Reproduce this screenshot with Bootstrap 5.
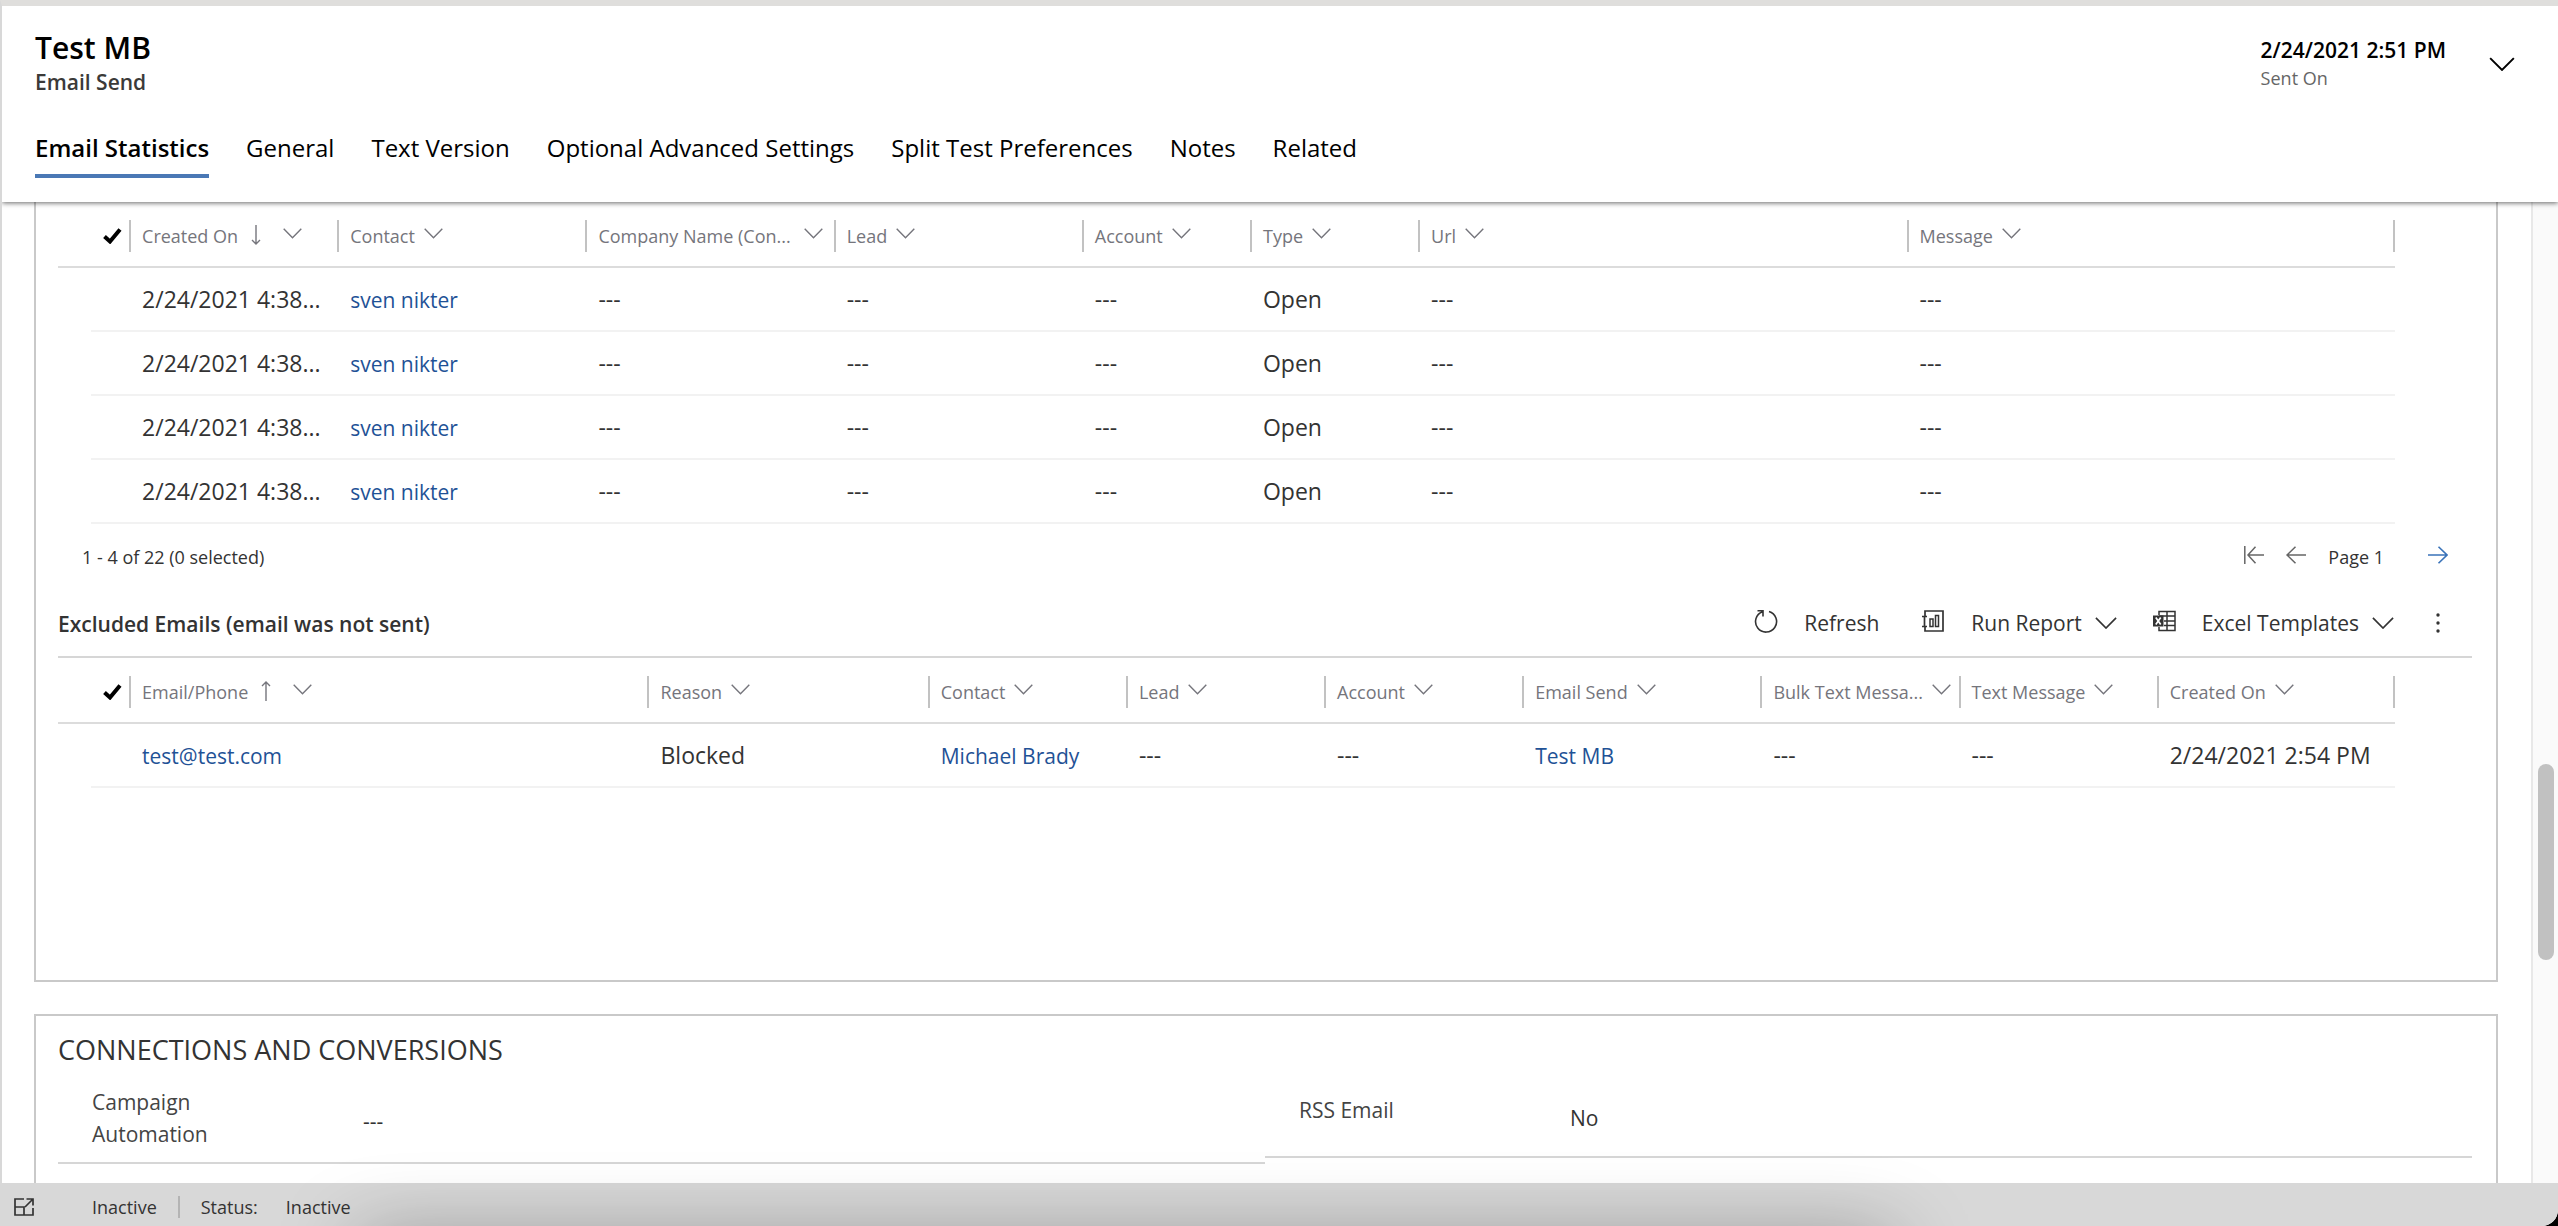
<!DOCTYPE html>
<html lang="en">
<head>
<meta charset="utf-8">
<meta name="viewport" content="width=device-width, initial-scale=1">
<title>Test MB - Email Send</title>
<link href="https://cdn.jsdelivr.net/npm/bootstrap@5.3.0/dist/css/bootstrap.min.css" rel="stylesheet">
<style>
  html, body { height: 100%; }
  body { font-family: "Open Sans", "Noto Sans", sans-serif; font-size: 21px; line-height: 32px; color: #333; background: #000; }
  svg { fill: none; stroke: currentColor; flex: none; }
  h1, h2, h3, p { margin: 0; }
  button { color: inherit; background: none; border: 0; padding: 0; }

  .app-shell { height: 100%; background: #fff; border-top: 6px solid #dfdedc; border-left: 2px solid #d8d8d8; border-bottom-right-radius: 16px; }

  /* record header */
  .record-head { z-index: 2; padding: 22px 43px 24px 33px; background: #fff; box-shadow: 0 1px 5px rgba(0, 0, 0, .6); clip-path: inset(0 0 -8px 0); color: #000; }
  .record-head h1 { font-size: 30px; line-height: 40px; font-weight: 600; }
  .record-head h2 { font-size: 21px; line-height: 28px; font-weight: 600; color: #3b3a39; }
  .head-summary { gap: 43px; }
  .head-date { font-weight: 600; line-height: 28px; padding-top: 8px; }
  .head-caption { font-size: 18px; line-height: 28px; color: #666; }
  .record-tabs { gap: 37px; margin-top: 34px; }
  .record-tabs a { padding: 0 0 8px; border-bottom: 4px solid transparent; font-size: 24px; line-height: 36px; color: #000; text-decoration: none; }
  .record-tabs a.active { font-weight: 600; border-color: #4a78b5; }

  /* scrolling form */
  .form-body { padding: 0 33px 0 32px; }
  .form-panel { border: 2px solid #c9c9c9; padding: 0 24px 48px 22px; }
  .form-panel + .form-panel { margin-top: 32px; padding-top: 16px; }
  .panel-grids { border-top: 0; padding-bottom: 192px; }
  .scroll-track { flex: none; width: 27px; background: #fafafa; border-left: 2px solid #e8e8e8; padding: 562px 4px 0 5px; }
  .scroll-thumb { height: 196px; background: #c1c1c1; border-radius: 9px; }

  /* grids */
  .grid-wrap { padding-right: 77px; }
  .data-grid { table-layout: fixed; width: 100%; }
  .data-grid th { padding: 18px 0 14px; border-bottom: 2px solid #dcdcdc; font-weight: 400; }
  .data-grid td { height: 64px; padding: 0 0 0 13px; border-bottom: 2px solid #f2f2f2; font-size: 23px; white-space: nowrap; }
  .data-grid td:first-child { border-bottom: 0; }
  .data-grid td a { font-size: 21px; color: #1f5296; text-decoration: none; }
  .select-all { display: block; margin: 0 7px 4px auto; line-height: 1; color: #000; }
  .head-cell { height: 32px; border-left: 2px solid #c2c2c2; padding-left: 11px; gap: 9px; color: #75757c; font-size: 18px; white-space: nowrap; }
  .head-cell svg { margin-bottom: 5px; }
  th:last-child .head-cell { border-right: 2px solid #c2c2c2; }
  .head-cell .sort-arrow { margin: 0 13px 2px 4px; }
  .w-gutter { width: 33px; } .w-check { width: 38px; }
  .w-168 { width: 168px; } .w-198 { width: 198px; } .w-208 { width: 208px; } .w-238 { width: 238px; } .w-248 { width: 248px; }
  .w-280 { width: 280px; } .w-488 { width: 488px; } .w-518 { width: 518px; }

  .paging-bar { height: 66px; padding: 0 24px; font-size: 18px; }
  .paging-bar button { margin-bottom: 6px; line-height: 1; }
  .paging-tools { gap: 22px; color: #666; }
  .page-label { color: #333; margin-right: 22px; }
  .next-page { color: #3a73b9; }
  .sub-bar { height: 68px; border-bottom: 2px solid #d6d6d6; }
  .sub-bar h3 { font-size: 21px; font-weight: 600; line-height: 32px; padding-top: 2px; }
  .tool-row { gap: 35px; padding-right: 29px; }
  .tool-row button { gap: 26px; }
  .tool-row button .glyph { margin-bottom: 4px; }
  .tool-row .with-menu { margin-left: 7px; }
  .menu-chevron { margin-left: -13px; }

  /* connections section */
  .form-panel h2 { font-size: 27px; font-weight: 400; line-height: 36px; margin-bottom: 12px; }
  .field-row { border-bottom: 2px solid #d6d6d6; padding-left: 34px; }
  .field-tall { height: 84px; } .field-short { height: 78px; }
  .field-name { width: 271px; color: #444; }
  .field-name span { display: block; width: 160px; }
  .field-tall .field-name { padding-bottom: 6px; } .field-short .field-name { padding-bottom: 16px; }

  .status-foot { z-index: 2; height: 44px; background: #d8d8d8; font-size: 18px; border-bottom-right-radius: 16px; padding: 4px 0 0 13px; margin-left: -2px; }
  .foot-state { margin-left: 57px; padding-right: 21px; margin-right: 21px; border-right: 2px solid #b4b4b4; line-height: 22px; }
  .foot-value { margin-left: 28px; }
  /* soft shadow that spreads up from under the window edge */
  .glow-layer { position: absolute; inset: 0; z-index: 3; overflow: hidden; pointer-events: none; }
  .edge-glow { position: absolute; left: 14%; right: 26%; top: calc(100% + 14px); height: 60px; box-shadow: 0 0 80px rgba(0, 0, 0, .35); }
</style>
<script src="https://cdn.jsdelivr.net/npm/bootstrap@5.3.0/dist/js/bootstrap.bundle.min.js" defer></script>
</head>
<body class="position-relative">
<svg class="d-none">
  <symbol id="chev" viewBox="0 0 19 11"><path d="M.7.7 9.500 9.800 18.300.7" stroke-width="1.400"/></symbol>
  <symbol id="chev-lg" viewBox="0 0 24 13"><path d="M1 1 12 12 23 1" stroke-width="1.800"/></symbol>
  <symbol id="tick" viewBox="0 0 19 16"><path d="M1.500 8.500 7 13.500 17 1.500" stroke-width="4"/></symbol>
  <symbol id="back" viewBox="0 0 20 18"><path d="M20 9H1M9.500.7 1 9l8.500 8.300" stroke-width="1.500"/></symbol>
</svg>
<div class="app-shell d-flex flex-column overflow-hidden">
  <header class="record-head position-relative">
    <div class="d-flex justify-content-between">
      <div>
        <h1>Test MB</h1>
        <h2>Email Send</h2>
      </div>
      <div class="head-summary d-flex">
        <div>
          <div class="head-date">2/24/2021 2:51 PM</div>
          <div class="head-caption">Sent On</div>
        </div>
        <button type="button" aria-label="Expand header"><svg width="26" height="14"><use href="#chev-lg"/></svg></button>
      </div>
    </div>
    <nav class="record-tabs nav" aria-label="Form tabs">
      <a class="active" href="#">Email Statistics</a>
      <a href="#">General</a>
      <a href="#">Text Version</a>
      <a href="#">Optional Advanced Settings</a>
      <a href="#">Split Test Preferences</a>
      <a href="#">Notes</a>
      <a href="#">Related</a>
    </nav>
  </header>

  <div class="d-flex flex-grow-1 overflow-hidden">
    <main class="form-body flex-grow-1 overflow-hidden">
      <section class="form-panel panel-grids">
        <div class="grid-wrap">
          <table class="data-grid">
            <colgroup><col class="w-gutter"><col class="w-check"><col class="w-208"><col class="w-248"><col class="w-248"><col class="w-248"><col class="w-168"><col class="w-168"><col class="w-488"><col class="w-488"></colgroup>
            <thead>
              <tr>
                <th></th>
                <th><button type="button" class="select-all" aria-label="Select all"><svg width="19" height="16"><use href="#tick"/></svg></button></th>
                <th><div class="head-cell d-flex align-items-center"><span>Created On</span><svg class="sort-arrow" width="10" height="20" viewBox="0 0 10 20"><path d="M5 0v19M1 15l4 4 4-4" stroke-width="1.400"/></svg><svg width="19" height="11"><use href="#chev"/></svg></div></th>
                <th><div class="head-cell d-flex align-items-center"><span>Contact</span><svg width="19" height="11"><use href="#chev"/></svg></div></th>
                <th><div class="head-cell d-flex align-items-center"><span>Company Name (Con...</span><svg class="ms-1" width="19" height="11"><use href="#chev"/></svg></div></th>
                <th><div class="head-cell d-flex align-items-center"><span>Lead</span><svg width="19" height="11"><use href="#chev"/></svg></div></th>
                <th><div class="head-cell d-flex align-items-center"><span>Account</span><svg width="19" height="11"><use href="#chev"/></svg></div></th>
                <th><div class="head-cell d-flex align-items-center"><span>Type</span><svg width="19" height="11"><use href="#chev"/></svg></div></th>
                <th><div class="head-cell d-flex align-items-center"><span>Url</span><svg width="19" height="11"><use href="#chev"/></svg></div></th>
                <th><div class="head-cell d-flex align-items-center"><span>Message</span><svg width="19" height="11"><use href="#chev"/></svg></div></th>
              </tr>
            </thead>
            <tbody>
              <tr><td></td><td></td><td>2/24/2021 4:38...</td><td><a href="#">sven nikter</a></td><td>---</td><td>---</td><td>---</td><td>Open</td><td>---</td><td>---</td></tr>
              <tr><td></td><td></td><td>2/24/2021 4:38...</td><td><a href="#">sven nikter</a></td><td>---</td><td>---</td><td>---</td><td>Open</td><td>---</td><td>---</td></tr>
              <tr><td></td><td></td><td>2/24/2021 4:38...</td><td><a href="#">sven nikter</a></td><td>---</td><td>---</td><td>---</td><td>Open</td><td>---</td><td>---</td></tr>
              <tr><td></td><td></td><td>2/24/2021 4:38...</td><td><a href="#">sven nikter</a></td><td>---</td><td>---</td><td>---</td><td>Open</td><td>---</td><td>---</td></tr>
            </tbody>
          </table>
        </div>
        <div class="paging-bar d-flex align-items-center justify-content-between">
          <span>1 - 4 of 22 (0 selected)</span>
          <div class="paging-tools d-flex align-items-center">
            <button type="button" aria-label="First page"><svg width="20" height="18" viewBox="0 0 20 18"><path d="M.8 0v18M20 9H4M11.500.7 4 9l7.500 8.300" stroke-width="1.500"/></svg></button>
            <button type="button" aria-label="Previous page"><svg width="20" height="18"><use href="#back"/></svg></button>
            <span class="page-label">Page 1</span>
            <button type="button" class="next-page" aria-label="Next page"><svg width="20" height="18" viewBox="0 0 20 18"><path d="M0 9h19M10.500.7 19 9l-8.500 8.300" stroke-width="1.600"/></svg></button>
          </div>
        </div>
        <div class="sub-bar d-flex align-items-center justify-content-between">
          <h3>Excluded Emails (email was not sent)</h3>
          <div class="tool-row d-flex align-items-center">
            <button type="button" class="d-flex align-items-center"><svg class="glyph" width="24" height="24" viewBox="0 0 24 24"><path d="M15 2.500A10.500 10.500 0 1 1 8.500 2.700M3.500 1.800H9V7.500" stroke-width="1.600"/></svg>Refresh</button>
            <button type="button" class="with-menu d-flex align-items-center"><svg class="glyph" width="24" height="24" viewBox="0 0 24 24"><path d="M4 7V2H22V22H4V18M1 7.500H6M1 17.500H6M3.500 7.500V17.500" stroke-width="1.700"/><path d="M9 10h3v7.500h-3zM14.500 6.500h3v11h-3z" stroke-width="1.500"/></svg>Run Report<svg class="menu-chevron" width="22" height="12"><use href="#chev-lg"/></svg></button>
            <button type="button" class="d-flex align-items-center"><svg class="glyph" width="24" height="24" viewBox="0 0 24 24"><path d="M7 6V2.500H23V21.500H7V18M7 7H23M12 12H23M12 16.500H23M15 2V22" stroke-width="1.500"/><path d="M1 6.500H11.500V17.500H1z" fill="currentColor" stroke="none"/><path d="M3.800 8.500 8.700 15.500M8.700 8.500 3.800 15.500" stroke="#fff" stroke-width="1.700"/></svg>Excel Templates<svg class="menu-chevron" width="22" height="12"><use href="#chev-lg"/></svg></button>
            <button type="button" class="ms-1 d-flex" aria-label="More commands"><svg width="10" height="22" viewBox="0 0 10 22"><g fill="currentColor" stroke="none"><circle cx="5" cy="3" r="1.700"/><circle cx="5" cy="11" r="1.700"/><circle cx="5" cy="19" r="1.700"/></g></svg></button>
          </div>
        </div>
        <div class="grid-wrap">
          <table class="data-grid">
            <colgroup><col class="w-gutter"><col class="w-check"><col class="w-518"><col class="w-280"><col class="w-198"><col class="w-198"><col class="w-198"><col class="w-238"><col class="w-198"><col class="w-198"><col class="w-238"></colgroup>
            <thead>
              <tr>
                <th></th>
                <th><button type="button" class="select-all" aria-label="Select all"><svg width="19" height="16"><use href="#tick"/></svg></button></th>
                <th><div class="head-cell d-flex align-items-center"><span>Email/Phone</span><svg class="sort-arrow" width="10" height="20" viewBox="0 0 10 20"><path d="M5 20V1M1 5l4-4 4 4" stroke-width="1.400"/></svg><svg width="19" height="11"><use href="#chev"/></svg></div></th>
                <th><div class="head-cell d-flex align-items-center"><span>Reason</span><svg width="19" height="11"><use href="#chev"/></svg></div></th>
                <th><div class="head-cell d-flex align-items-center"><span>Contact</span><svg width="19" height="11"><use href="#chev"/></svg></div></th>
                <th><div class="head-cell d-flex align-items-center"><span>Lead</span><svg width="19" height="11"><use href="#chev"/></svg></div></th>
                <th><div class="head-cell d-flex align-items-center"><span>Account</span><svg width="19" height="11"><use href="#chev"/></svg></div></th>
                <th><div class="head-cell d-flex align-items-center"><span>Email Send</span><svg width="19" height="11"><use href="#chev"/></svg></div></th>
                <th><div class="head-cell d-flex align-items-center"><span>Bulk Text Messa...</span><svg width="19" height="11"><use href="#chev"/></svg></div></th>
                <th><div class="head-cell d-flex align-items-center"><span>Text Message</span><svg width="19" height="11"><use href="#chev"/></svg></div></th>
                <th><div class="head-cell d-flex align-items-center"><span>Created On</span><svg width="19" height="11"><use href="#chev"/></svg></div></th>
              </tr>
            </thead>
            <tbody>
              <tr><td></td><td></td><td><a href="#">test@test.com</a></td><td>Blocked</td><td><a href="#">Michael Brady</a></td><td>---</td><td>---</td><td><a href="#">Test MB</a></td><td>---</td><td>---</td><td>2/24/2021 2:54 PM</td></tr>
            </tbody>
          </table>
        </div>
      </section>

      <section class="form-panel">
        <h2>CONNECTIONS AND CONVERSIONS</h2>
        <div class="row g-0 align-items-start">
          <div class="col-6 field-row field-tall d-flex align-items-center">
            <div class="field-name"><span>Campaign Automation</span></div>
            <div>---</div>
          </div>
          <div class="col-6 field-row field-short d-flex align-items-center">
            <div class="field-name"><span>RSS Email</span></div>
            <div>No</div>
          </div>
        </div>
      </section>
    </main>
    <div class="scroll-track" aria-hidden="true"><div class="scroll-thumb"></div></div>
  </div>

  <footer class="status-foot position-relative d-flex align-items-center">
    <button type="button" class="d-flex" aria-label="Pop out"><svg width="22" height="20" viewBox="0 0 22 20"><path d="M11 2H2V18H20V11M2 10H11V18M12 10 20 2M13.500 2H20V8.500" stroke-width="1.700"/></svg></button>
    <span class="foot-state">Inactive</span>
    <span>Status:</span>
    <span class="foot-value">Inactive</span>
  </footer>
</div>
<div class="glow-layer"><div class="edge-glow"></div></div>
</body>
</html>
